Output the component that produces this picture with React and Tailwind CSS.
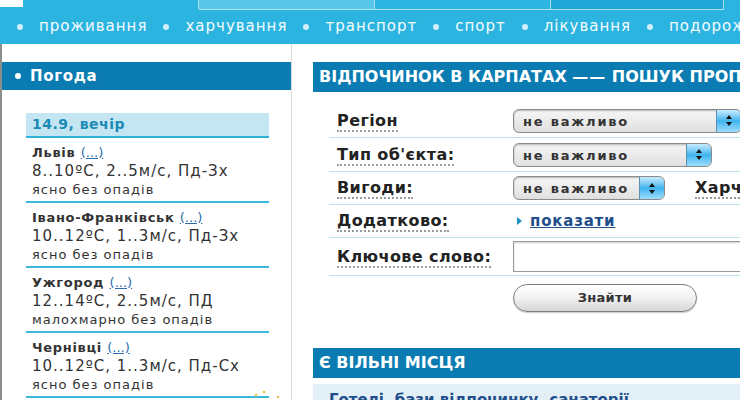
const navItems = ["проживання", "харчування", "транспорт", "спорт", "лікування", "подорожі"];

const weather = [
  { city: "Львів", temp: "8..10ºC, 2..5м/с, Пд-Зх", sky: "ясно без опадів" },
  { city: "Івано-Франківськ", temp: "10..12ºC, 1..3м/с, Пд-Зх", sky: "ясно без опадів" },
  { city: "Ужгород", temp: "12..14ºC, 2..5м/с, ПД", sky: "малохмарно без опадів" },
  { city: "Чернівці", temp: "10..12ºC, 1..3м/с, Пд-Сх", sky: "ясно без опадів" },
];

// aqua-style select with the blue stepper cap on the right
function Select({ width }) {
  return (
    <div
      className="flex shrink-0 h-[24px] rounded-[6px] border border-[#8a8a8a] bg-gradient-to-b from-[#f6f6f6] to-[#e0e0e0] shadow-[inset_0_1px_2px_rgba(0,0,0,0.25)] overflow-hidden"
      style={{ width }}
    >
      <span className="flex-1 pl-[9px] text-[13px] font-bold tracking-[1.8px] leading-[23px] text-[#333] whitespace-nowrap">
        не важливо
      </span>
      <span className="w-[25px] flex flex-col items-center justify-center gap-[3px] bg-gradient-to-b from-[#c6ecff] via-[#3cb4ee] to-[#9adfff] border-l border-[#5d8fb0] rounded-r-[5px]">
        <svg width="6" height="4" viewBox="0 0 6 4">
          <path d="M3 0L6 4H0z" fill="#111" />
        </svg>
        <svg width="6" height="4" viewBox="0 0 6 4">
          <path d="M0 0H6L3 4z" fill="#111" />
        </svg>
      </span>
    </div>
  );
}

function Label({ children }) {
  return (
    <span className="inline-block whitespace-nowrap text-[16px] font-bold tracking-[0.4px] text-[#222] leading-[18px] border-b-2 border-dotted border-[#9a9a9a]">
      {children}
    </span>
  );
}

function FormRow({ label, children, className = "h-[34px]" }) {
  return (
    <div className={`flex items-center border-b border-[#bfe3f0] ${className}`}>
      <div className="w-[184px] shrink-0 pl-[8px]">
        <Label>{label}</Label>
      </div>
      <div className="flex-1 flex items-center min-w-0">{children}</div>
    </div>
  );
}

export default function App() {
  return (
    <div className="relative w-[740px] h-[400px] overflow-hidden bg-white font-['DejaVu_Sans','Liberation_Sans',sans-serif]">
      {/* top band: tabs + section nav */}
      <header className="h-[44px] bg-[#2cb4e0]">
        <div className="flex h-[10px]">
          <div className="w-[23px] h-[7px] bg-white" />
          <div className="w-[175px]" />
          <div className="w-[177px] bg-[#5ac6ea] border-x border-b border-[#a8e2f4] rounded-bl-[3px]" />
          <div className="w-[176px] bg-[#2db5e1] border-r border-b border-[#a8e2f4]" />
          <div className="w-[173px] bg-[#20a6d6] border-r border-b border-[#a8e2f4]" />
        </div>
        <nav className="flex items-center h-[33px] pl-[17px] gap-[16px] whitespace-nowrap">
          {navItems.map((item) => (
            <span key={item} className="flex items-center gap-[16px] text-[15px] tracking-[1px] text-[#f4fbff]">
              <span className="w-[6px] h-[6px] rounded-full bg-[#d2f0fa]" />
              {item}
            </span>
          ))}
        </nav>
      </header>

      <div className="flex h-[356px]">
        {/* weather panel */}
        <aside className="w-[292px] shrink-0 border-l-2 border-[#8d8d8d] border-r border-r-[#dcdcdc] pt-[18px]">
          <div className="h-[28px] bg-[#0b7cb1] flex items-center pl-[13px] gap-[9px]">
            <span className="w-[6px] h-[6px] rounded-full bg-white" />
            <span className="text-[15px] font-bold tracking-[0.7px] text-white">Погода</span>
          </div>
          <div className="pl-[24px] pr-[22px] pt-[23px]">
            <div className="h-[25px] bg-[#c4e6f3] border-b-2 border-[#2fb3dc] pl-[6px] text-[14px] font-bold tracking-[0.5px] text-[#1a8ab5] leading-[23px]">
              14.9, вечір
            </div>
            {weather.map((w) => (
              <div key={w.city} className="pl-[6px] pt-[6px] h-[65px] border-b-2 border-[#3cb8dc] text-[#333] whitespace-nowrap">
                <div className="text-[13px] font-bold tracking-[0.7px] leading-[18px]">
                  {w.city}{" "}
                  <span className="font-normal tracking-normal text-[#2a6cb0] underline">(...)</span>
                </div>
                <div className="text-[15px] tracking-[1px] leading-[18px]">{w.temp}</div>
                <div className="text-[13px] tracking-[1px] leading-[19px]">{w.sky}</div>
              </div>
            ))}
          </div>
        </aside>

        {/* search panel */}
        <main className="flex-1 ml-[21px] min-w-0 overflow-hidden pt-[18px]">
          <div className="h-[30px] bg-[#0b7cb1] flex items-center pl-[6px] whitespace-nowrap">
            <span className="text-[16px] font-bold text-white">
              ВІДПОЧИНОК В КАРПАТАХ <span className="tracking-[1px]">——</span> ПОШУК ПРОПОЗИЦІЙ
            </span>
          </div>
          <div className="ml-[16px] mt-[12px]">
            <FormRow label="Регіон">
              <Select width={229} />
            </FormRow>
            <FormRow label="Тип об'єкта:">
              <Select width={199} />
            </FormRow>
            <FormRow label="Вигоди:" className="h-[33px]">
              <Select width={152} />
              <span className="ml-[30px] shrink-0">
                <Label>Харчування:</Label>
              </span>
            </FormRow>
            <FormRow label="Додатково:" className="h-[33px]">
              <span className="flex items-center gap-[8px] pl-[4px]">
                <svg width="5" height="8" viewBox="0 0 5 8">
                  <path d="M0 0L5 4L0 8z" fill="#1d8fc4" />
                </svg>
                <span className="text-[15px] font-bold tracking-[0.8px] text-[#1f4f8a] underline">показати</span>
              </span>
            </FormRow>
            <FormRow label="Ключове слово:" className="h-[38px]">
              <div className="w-[240px] shrink-0 h-[31px] border border-[#9a9a9a] bg-white shadow-[inset_0_1px_2px_rgba(0,0,0,0.2)]" />
            </FormRow>
            <div className="pl-[184px] pt-[8px]">
              <button className="w-[184px] h-[28px] rounded-full border border-[#7d7d7d] bg-gradient-to-b from-white via-[#f2f2f2] to-[#d6d6d6] text-[13px] font-bold tracking-[0.3px] text-[#333] shadow-[0_1px_1px_rgba(0,0,0,0.2)]">
                Знайти
              </button>
            </div>
          </div>
          <div className="mt-[36px] h-[30px] bg-[#0b7cb1] flex items-center pl-[6px]">
            <span className="text-[16px] font-bold text-white">Є ВІЛЬНІ МІСЦЯ</span>
          </div>
          <div className="mt-[6px] h-[30px] bg-[#e3eff6] pl-[16px] pt-[4px] whitespace-nowrap">
            <span className="text-[15px] font-bold text-[#1f4f8a]">Готелі, бази відпочинку, санаторії</span>
          </div>
        </main>
      </div>

      {/* little sparkle on the panel edge */}
      <svg className="absolute left-[252px] top-[389px]" width="30" height="10" viewBox="0 0 30 10">
        <circle cx="4" cy="6" r="1.6" fill="#f3d36a" />
        <circle cx="12" cy="3" r="1.3" fill="#f0c04a" />
        <circle cx="26" cy="8" r="1.2" fill="#f2b84a" />
      </svg>
    </div>
  );
}
